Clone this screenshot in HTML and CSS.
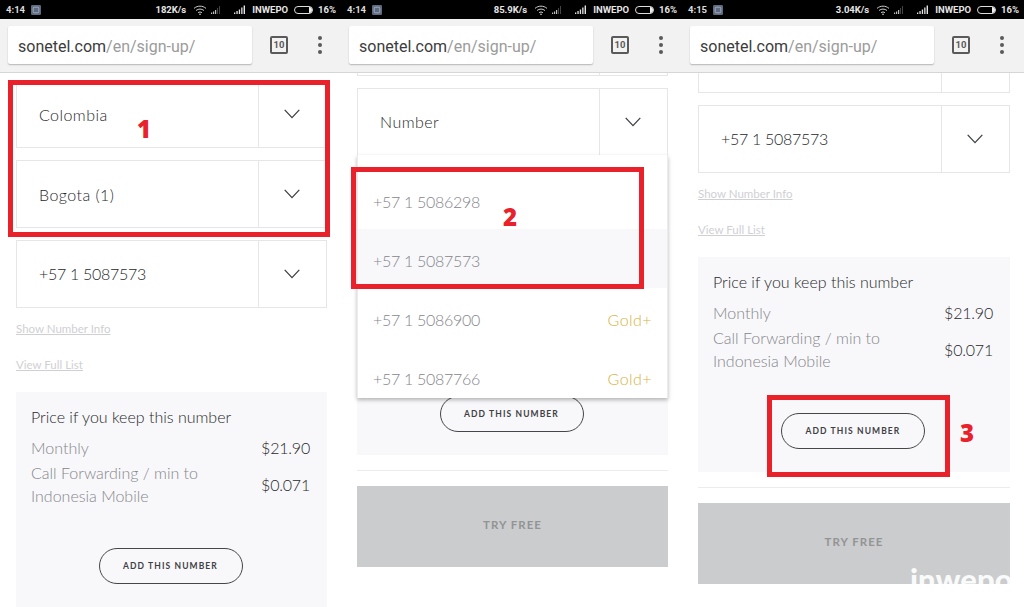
FILE: index.html
```html
<!DOCTYPE html>
<html lang="en">
<head>
<meta charset="utf-8">
<title>Sonetel sign-up steps</title>
<link rel="stylesheet" href="styles.css">
</head>
<body>
<svg class="defs" aria-hidden="true">
  <symbol id="chev" viewBox="0 0 16 10"><polyline points="0.7,0.9 8,8.6 15.3,0.9" fill="none" stroke="#3f4045" stroke-width="1.3"/></symbol>
  <symbol id="wifi" viewBox="0 0 14 10"><path d="M1 3.4C4.500 .4 9.500 .4 13 3.4M3 5.600C5.400 3.600 8.600 3.600 11 5.600M5 7.700C6.200 6.800 7.800 6.800 9 7.700" fill="none" stroke="#cfcfcf" stroke-width="1"/><circle cx="7" cy="9.200" r=".8" fill="#e4e4e4"/></symbol>
  <symbol id="sig1" viewBox="0 0 11 9"><path d="M0 7.500h1.200V9H0zM2 6.500h1.200V9H2zM4 5h1.200v4H4z" fill="#bdbdbd"/><path d="M6 3h1v6H6zM8 1h1v8H8z" fill="#444"/></symbol>
  <symbol id="sig2" viewBox="0 0 12 9"><path d="M0 7.400h1.300V9H0zM2.400 6h1.300v3H2.400zM4.800 4.400h1.300V9H4.800zM7.200 2.400h1.300V9H7.200zM9.600 .4h1.400V9H9.600z" fill="#e4e4e4"/></symbol>
  <symbol id="shot" viewBox="0 0 10 10"><rect width="10" height="10" rx="1.200" fill="#5d6a80"/><rect x="2.200" y="2.200" width="5.600" height="5.600" rx="1" fill="none" stroke="#a9b2c2" stroke-width=".9"/></symbol>
</svg>
<main class="screens">

  <section class="screen">
    <header class="status">
      <span class="time">4:14</span>
      <svg class="shot"><use href="#shot"/></svg>
      <span class="net">182K/s</span>
      <svg class="wifi"><use href="#wifi"/></svg>
      <svg class="sig1"><use href="#sig1"/></svg>
      <svg class="sig2"><use href="#sig2"/></svg>
      <span class="carrier">INWEPO</span>
      <span class="batt"><i></i></span>
      <span class="pct">16%</span>
    </header>
    <nav class="toolbar">
      <div class="url">sonetel.com<span>/en/sign-up/</span></div>
      <div class="tabs">10</div>
      <div class="kebab"><i></i><i></i><i></i></div>
    </nav>
    <div class="page">
      <div class="form top-1">
        <div class="select"><span class="val">Colombia</span><span class="arrow"><svg class="chev"><use href="#chev"/></svg></span></div>
        <div class="select"><span class="val">Bogota (1)</span><span class="arrow"><svg class="chev"><use href="#chev"/></svg></span></div>
        <div class="select"><span class="val tel">+57 1 5087573</span><span class="arrow"><svg class="chev"><use href="#chev"/></svg></span></div>
        <a class="link first">Show Number Info</a>
        <a class="link">View Full List</a>
        <div class="price">
          <h3>Price if you keep this number</h3>
          <div class="row"><span>Monthly</span><b>$21.90</b></div>
          <div class="row"><span>Call Forwarding / min to<br>Indonesia Mobile</span><b>$0.071</b></div>
          <div class="btn">ADD THIS NUMBER</div>
        </div>
        <hr class="rule">
        <div class="try">TRY FREE</div>
      </div>
    </div>
    <div class="mark m1"></div>
    <div class="num n1">1</div>
  </section>

  <section class="screen">
    <header class="status">
      <span class="time">4:14</span>
      <svg class="shot"><use href="#shot"/></svg>
      <span class="net">85.9K/s</span>
      <svg class="wifi"><use href="#wifi"/></svg>
      <svg class="sig1"><use href="#sig1"/></svg>
      <svg class="sig2"><use href="#sig2"/></svg>
      <span class="carrier">INWEPO</span>
      <span class="batt"><i></i></span>
      <span class="pct">16%</span>
    </header>
    <nav class="toolbar">
      <div class="url">sonetel.com<span>/en/sign-up/</span></div>
      <div class="tabs">10</div>
      <div class="kebab"><i></i><i></i><i></i></div>
    </nav>
    <div class="page">
      <div class="form top-2">
        <div class="select"><span class="val">Colombia</span><span class="arrow"><svg class="chev"><use href="#chev"/></svg></span></div>
        <div class="select"><span class="val">Bogota (1)</span><span class="arrow"><svg class="chev"><use href="#chev"/></svg></span></div>
        <div class="select">
          <span class="val">Number</span><span class="arrow"><svg class="chev"><use href="#chev"/></svg></span>
          <ul class="menu">
            <li><span class="tel">+57 1 5086298</span></li>
            <li class="hover"><span class="tel">+57 1 5087573</span></li>
            <li><span class="tel">+57 1 5086900</span><em>Gold+</em></li>
            <li><span class="tel">+57 1 5087766</span><em>Gold+</em></li>
          </ul>
        </div>
        <a class="link first">Show Number Info</a>
        <a class="link">View Full List</a>
        <div class="price">
          <h3>Price if you keep this number</h3>
          <div class="row"><span>Monthly</span><b>$21.90</b></div>
          <div class="row"><span>Call Forwarding / min to<br>Indonesia Mobile</span><b>$0.071</b></div>
          <div class="btn">ADD THIS NUMBER</div>
        </div>
        <hr class="rule">
        <div class="try">TRY FREE</div>
      </div>
    </div>
    <div class="mark m2"></div>
    <div class="num n2">2</div>
  </section>

  <section class="screen wide">
    <header class="status">
      <span class="time">4:15</span>
      <svg class="shot"><use href="#shot"/></svg>
      <span class="net">3.04K/s</span>
      <svg class="wifi"><use href="#wifi"/></svg>
      <svg class="sig1"><use href="#sig1"/></svg>
      <svg class="sig2"><use href="#sig2"/></svg>
      <span class="carrier">INWEPO</span>
      <span class="batt"><i></i></span>
      <span class="pct">16%</span>
    </header>
    <nav class="toolbar">
      <div class="url">sonetel.com<span>/en/sign-up/</span></div>
      <div class="tabs">10</div>
      <div class="kebab"><i></i><i></i><i></i></div>
    </nav>
    <div class="page">
      <div class="form top-3">
        <div class="select"><span class="val">Colombia</span><span class="arrow"><svg class="chev"><use href="#chev"/></svg></span></div>
        <div class="select"><span class="val">Bogota (1)</span><span class="arrow"><svg class="chev"><use href="#chev"/></svg></span></div>
        <div class="select"><span class="val tel">+57 1 5087573</span><span class="arrow"><svg class="chev"><use href="#chev"/></svg></span></div>
        <a class="link first">Show Number Info</a>
        <a class="link">View Full List</a>
        <div class="price">
          <h3>Price if you keep this number</h3>
          <div class="row"><span>Monthly</span><b>$21.90</b></div>
          <div class="row"><span>Call Forwarding / min to<br>Indonesia Mobile</span><b>$0.071</b></div>
          <div class="btn">ADD THIS NUMBER</div>
        </div>
        <hr class="rule">
        <div class="try">TRY FREE</div>
      </div>
    </div>
    <div class="mark m3"></div>
    <div class="num n3">3</div>
    <div class="watermark">inwepo</div>
  </section>

</main>
</body>
</html>
```
FILE: styles.css
```css
* { box-sizing: border-box; }
html, body { margin: 0; padding: 0; background: #fff; }
body { width: 1024px; height: 607px; overflow: hidden; font-family: Lato, "Noto Sans", sans-serif; }
.defs { position: absolute; width: 0; height: 0; }

.screens { display: flex; height: 607px; }
.screen { position: relative; width: 341px; height: 607px; display: flex; flex-direction: column; overflow: hidden; background: #fff; }
.screen.wide { width: 342px; }

/* status bar */
.status { height: 19px; flex: none; background: #000; color: #e6e6e6; display: flex; align-items: center; padding: 0 5px 0 6px; font: 500 9.5px Roboto, sans-serif; }
.time { font-weight: 700; color: #ddd; }
.shot { width: 10px; height: 10px; margin-left: 6px; }
.net { margin-left: auto; font-weight: 700; }
.wifi { width: 14px; height: 10px; margin-left: 7px; }
.sig1 { width: 11px; height: 9px; margin-left: 4px; }
.sig2 { width: 12px; height: 9px; margin-left: 12px; }
.carrier { margin-left: 6px; font-weight: 700; }
.batt { position: relative; width: 19px; height: 8px; margin-left: 6px; border: 1px solid #ddd; border-radius: 4px; }
.batt i { position: absolute; right: 0; top: 0; bottom: 0; width: 3px; background: #eee; border-radius: 0 3px 3px 0; }
.pct { margin-left: 5px; font-weight: 700; }

/* browser toolbar */
.toolbar { height: 54px; flex: none; position: relative; z-index: 2; background: #f2f2f2; border-bottom: 1px solid #d6d6d6; display: flex; align-items: center; padding: 0 0 1px 8px; }
.url { width: 244px; height: 38px; background: #fff; border-radius: 2px; box-shadow: 0 1px 1.5px rgba(0,0,0,.25); padding-left: 10px; font: 400 16px/42px Roboto, sans-serif; color: #3c3c3c; white-space: nowrap; }
.url span { color: #9b9b9b; }
.tabs { width: 18px; height: 18px; margin-left: 18px; border: 2px solid #5a5a5a; border-radius: 2px; font: 700 9.5px/14px Roboto, sans-serif; color: #5a5a5a; text-align: center; }
.kebab { margin-left: 30px; display: flex; flex-direction: column; gap: 3px; }
.kebab i { width: 4px; height: 4px; border-radius: 50%; background: #5a5a5a; }

/* scrolled page content */
.page { flex: 1; min-height: 0; overflow: hidden; padding: 0 14px 0 16px; }
.form { display: flex; flex-direction: column; }
.top-1 { margin-top: 7px; }
.top-2 { margin-top: -145px; }
.top-3 { margin-top: -128px; }

.select { position: relative; height: 68px; flex: none; margin-bottom: 12px; border: 1px solid #e6e6e9; display: flex; align-items: center; color: #26272b; font-size: 16px; font-weight: 300; letter-spacing: .45px; }
.select .val { flex: 1; padding-left: 22px; }
.select:nth-child(3) .val { padding-bottom: 2px; }
.tel { letter-spacing: -.3px; }
.arrow { width: 68px; height: 100%; padding-right: 2px; border-left: 1px solid #e6e6e9; display: flex; align-items: center; justify-content: center; }
.chev { width: 16px; height: 10px; }

.menu { position: absolute; z-index: 1; top: 100%; left: -1px; right: -1px; height: 243px; margin: 0; padding: 15px 0 0; list-style: none; overflow: hidden; background: #fff; border-left: 1px solid #ececee; border-right: 1px solid #ececee; box-shadow: 0 2px 4px rgba(0,0,0,.28); color: #85868c; }
.menu li { height: 59px; flex: none; padding: 3px 15px 0; display: flex; align-items: center; justify-content: space-between; }
.menu li.hover { background: #f8f8fa; }
.menu em { font-style: normal; color: #d8b23f; }

.link { display: block; height: 36px; font-size: 11.5px; line-height: 36px; color: #cfd0d4; text-decoration: underline; }
.link.first { margin-top: -9px; }
.link + .link { margin-bottom: 9px; }

.price { height: 215px; flex: none; background: #f8f8fa; padding: 13px 17px 0 15px; display: flex; flex-direction: column; font-weight: 300; }
.price h3 { margin: 0 0 7px; font-size: 16px; line-height: 24px; font-weight: 300; color: #26272b; letter-spacing: 0; }
.row { display: flex; justify-content: space-between; align-items: center; margin-bottom: 2px; font-size: 16px; line-height: 23px; letter-spacing: 0; color: #85868c; }
.row b { font-weight: 300; color: #26272b; letter-spacing: -.2px; }
.btn { width: 144px; height: 36px; margin: 39px auto 0; border: 1px solid #45464b; border-radius: 18px; font-size: 8.5px; font-weight: 700; line-height: 34px; letter-spacing: 1.1px; color: #3f4045; text-align: center; }

.rule { width: 100%; height: 1px; margin: 15px 0; border: 0; background: #ececee; flex: none; }
.try { height: 81px; flex: none; background: #cbcccd; color: #939496; font-size: 11.5px; font-weight: 700; letter-spacing: 1px; line-height: 78px; text-align: center; }

/* annotations laid over the screenshots */
.mark { position: absolute; z-index: 3; border: 5px solid #e8212b; }
.m1 { left: 8px; top: 80px; width: 322px; height: 157px; }
.m2 { left: 10px; top: 167px; width: 293px; height: 122px; }
.m3 { left: 85px; top: 395px; width: 183px; height: 82px; }
.num { position: absolute; z-index: 3; font: 800 24px/28px "Open Sans", sans-serif; color: #e8212b; }
.n1 { left: 137px; top: 115px; }
.n2 { left: 162px; top: 203px; }
.n3 { left: 278px; top: 419px; }
.watermark { position: absolute; z-index: 3; left: 228px; top: 559px; font: 900 31px/40px Lato, sans-serif; color: #fff; opacity: .9; }
```
